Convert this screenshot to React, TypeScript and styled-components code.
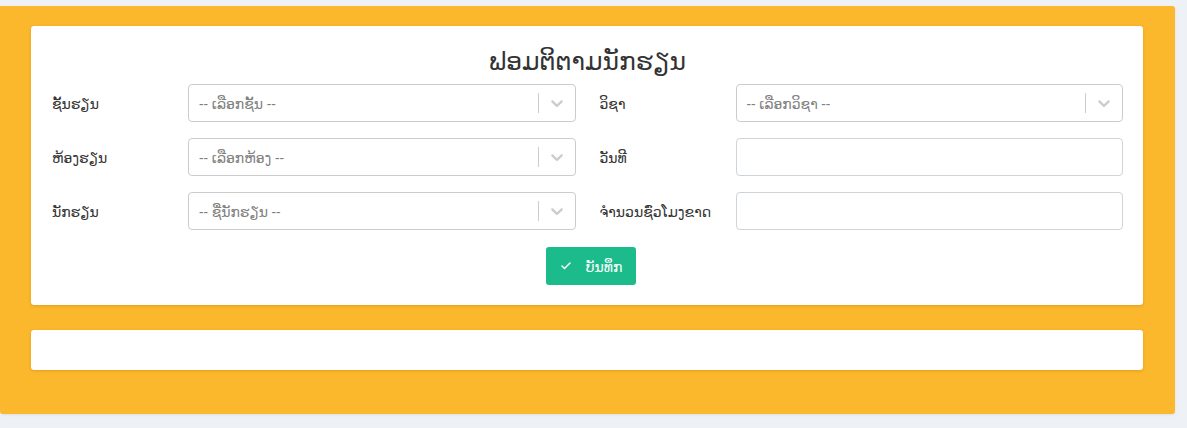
import styled, { createGlobalStyle } from "styled-components";

const GlobalStyle = createGlobalStyle`
  body {
    margin: 0;
    background: #eef1f5;
    font-family: "Noto Sans", "DejaVu Sans", sans-serif;
    color: #333;
  }
`;

const Page = styled.div`
  padding: 6px 12px 15px 0;
`;

const Panel = styled.div`
  background: #fbb82c;
  border-radius: 0 3px 3px 3px;
  padding: 20px 32px 44px 31px;
  display: flex;
  flex-direction: column;
  gap: 25px;
  box-shadow: 0 1px 3px rgba(0, 0, 0, 0.08);
`;

const Card = styled.div<{ $empty?: boolean }>`
  background: #fff;
  border-radius: 3px;
  box-shadow: 0 1px 3px rgba(180, 110, 0, 0.35);
  padding: ${({ $empty }) => ($empty ? "0" : "19px 20px 20px 21px")};
  height: ${({ $empty }) => ($empty ? "40px" : "auto")};
  box-sizing: border-box;
`;

const Title = styled.h2`
  margin: 0 0 9px;
  text-align: center;
  font-size: 25px;
  font-weight: 400;
  line-height: 30px;
  color: #333;
`;

const Grid = styled.div`
  display: grid;
  grid-template-columns: 1fr 1fr;
  column-gap: 24px;
  row-gap: 16px;
`;

const Field = styled.div`
  display: flex;
  align-items: center;
`;

const Label = styled.label`
  width: 136px;
  flex-shrink: 0;
  font-size: 14px;
  font-weight: 500;
  color: #333;
`;

const Select = styled.div`
  flex: 1;
  height: 38px;
  box-sizing: border-box;
  border: 1px solid #ccc;
  border-radius: 4px;
  display: flex;
  align-items: center;
  background: #fff;
`;

const Placeholder = styled.span`
  flex: 1;
  padding-left: 10px;
  font-size: 14px;
  color: #808080;
`;

const Separator = styled.span`
  width: 1px;
  align-self: stretch;
  margin: 8px 0;
  background: #ccc;
`;

const Indicator = styled.span`
  width: 36px;
  display: flex;
  justify-content: center;
  color: #ccc;
`;

const Input = styled.input`
  flex: 1;
  height: 38px;
  box-sizing: border-box;
  border: 1px solid #ced4da;
  border-radius: 4px;
  padding: 0 10px;
  font-size: 14px;
`;

const Actions = styled.div`
  display: flex;
  justify-content: center;
  margin-top: 17px;
  padding-left: 7px;
`;

const Button = styled.button`
  height: 38px;
  width: 90px;
  border: none;
  border-radius: 3px;
  background: #1cbb8c;
  color: #fff;
  font-family: inherit;
  font-size: 14px;
  display: flex;
  align-items: center;
  justify-content: center;
  gap: 14px;
  padding: 0;
`;

const Chevron = () => (
  <svg width="20" height="20" viewBox="0 0 20 20" fill="currentColor">
    <path d="M4.516 7.548c0.436-0.446 1.043-0.481 1.576 0l3.908 3.747 3.908-3.747c0.533-0.481 1.141-0.446 1.574 0 0.436 0.445 0.408 1.197 0 1.615-0.406 0.418-4.695 4.502-4.695 4.502-0.217 0.223-0.502 0.335-0.787 0.335s-0.57-0.112-0.789-0.335c0 0-4.287-4.084-4.695-4.502s-0.436-1.17 0-1.615z" />
  </svg>
);

const Check = () => (
  <svg width="12" height="12" viewBox="0 0 24 24" fill="none" stroke="currentColor" strokeWidth="3" strokeLinecap="round" strokeLinejoin="round">
    <path d="M20 6 9 17l-5-5" />
  </svg>
);

function SelectBox({ placeholder }: { placeholder: string }) {
  return (
    <Select>
      <Placeholder>{placeholder}</Placeholder>
      <Separator />
      <Indicator>
        <Chevron />
      </Indicator>
    </Select>
  );
}

export default function App() {
  return (
    <>
      <GlobalStyle />
      <Page>
        <Panel>
          <Card>
            <Title>ຟອມຕິຕາມນັກຮຽນ</Title>
            <Grid>
              <Field>
                <Label>ຊັ້ນຮຽນ</Label>
                <SelectBox placeholder="-- ເລືອກຊັ້ນ --" />
              </Field>
              <Field>
                <Label>ວິຊາ</Label>
                <SelectBox placeholder="-- ເລືອກວິຊາ --" />
              </Field>
              <Field>
                <Label>ຫ້ອງຮຽນ</Label>
                <SelectBox placeholder="-- ເລືອກຫ້ອງ --" />
              </Field>
              <Field>
                <Label>ວັນທີ</Label>
                <Input />
              </Field>
              <Field>
                <Label>ນັກຮຽນ</Label>
                <SelectBox placeholder="-- ຊື່ນັກຮຽນ --" />
              </Field>
              <Field>
                <Label>ຈຳນວນຊົ່ວໂມງຂາດ</Label>
                <Input />
              </Field>
            </Grid>
            <Actions>
              <Button>
                <Check />
                ບັນທຶກ
              </Button>
            </Actions>
          </Card>
          <Card $empty />
        </Panel>
      </Page>
    </>
  );
}
